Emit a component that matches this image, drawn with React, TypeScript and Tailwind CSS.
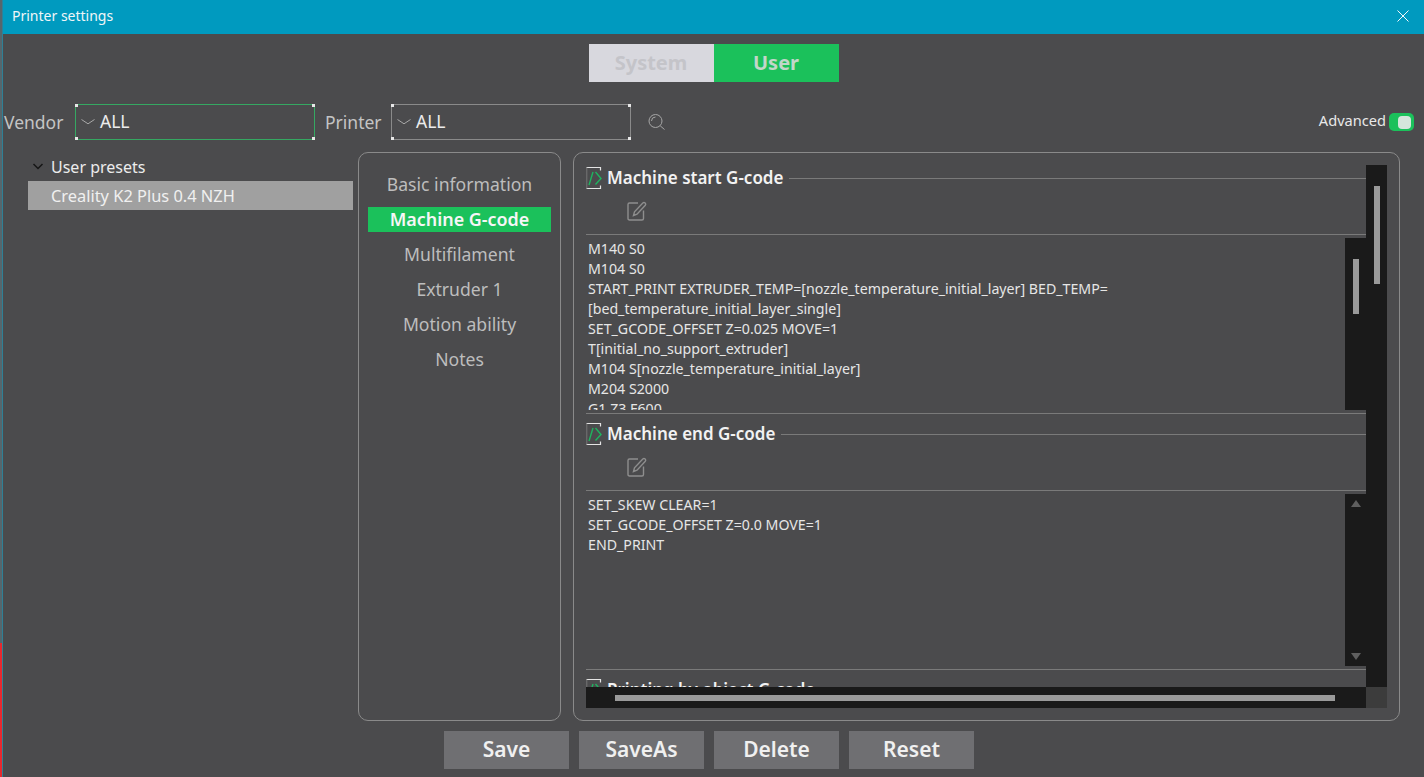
const startGcode = [
  'M140 S0',
  'M104 S0',
  'START_PRINT EXTRUDER_TEMP=[nozzle_temperature_initial_layer] BED_TEMP=',
  '[bed_temperature_initial_layer_single]',
  'SET_GCODE_OFFSET Z=0.025 MOVE=1',
  'T[initial_no_support_extruder]',
  'M104 S[nozzle_temperature_initial_layer]',
  'M204 S2000',
  'G1 Z3 F600',
];
const endGcode = ['SET_SKEW CLEAR=1', 'SET_GCODE_OFFSET Z=0.0 MOVE=1', 'END_PRINT'];
const navItems = ['Basic information', 'Machine G-code', 'Multifilament', 'Extruder 1', 'Motion ability', 'Notes'];

const Corner = ({ className }: { className: string }) => (
  <span className={`absolute w-[3px] h-[3px] bg-[#e8e8e8] ${className}`} />
);

const Combo = ({ active }: { active?: boolean }) => (
  <div className={`relative w-[240px] h-[36px] flex items-center border ${active ? 'border-[#35a862]' : 'border-[#8a8a8a]'}`}>
    <Corner className="-left-px -top-px" />
    <Corner className="-right-px -top-px" />
    <Corner className="-left-px -bottom-px" />
    <Corner className="-right-px -bottom-px" />
    <svg width="14" height="6" viewBox="0 0 14 6" className="ml-[5px]" fill="none" stroke="#a8a8a8" strokeWidth="1">
      <path d="M0.5 0.5 L7 4.8 L13.5 0.5" />
    </svg>
    <span className="ml-[5px] -mt-px text-[17.5px] text-[#ececec]">ALL</span>
  </div>
);

const CodeIcon = () => (
  <svg width="16" height="24" viewBox="0 0 16 24" fill="none" className="shrink-0">
    <path d="M0.5 1.5 H14.5 V4.5 M0.5 22.5 H14.5 V19.5" stroke="#e4e4e4" strokeWidth="1.2" />
    <path d="M0.8 1.5 V22.5" stroke="#7f7f7f" strokeWidth="0.8" />
    <path d="M7 6 L3 19 M9.5 6 L15 12.5 L9.5 18.5" stroke="#1fb35f" strokeWidth="1.4" />
  </svg>
);

const EditIcon = () => (
  <svg width="20" height="20" viewBox="0 0 20 20" fill="none" stroke="#8e8e8e" strokeWidth="1.4">
    <path d="M16.5 9.5 V17.5 Q16.5 19 15 19 H2.5 Q1 19 1 17.5 V3.5 Q1 2 2.5 2 H11" />
    <path d="M6.5 14.5 L7.5 10.8 L15.8 2 Q17 1 18.2 2.1 Q19.2 3.3 18.1 4.5 L10 13.2 Z" />
  </svg>
);

const GcodeSection = ({ title, lines, thumb }: { title: string; lines?: string[]; thumb?: boolean }) => (
  <section className="h-[256px] shrink-0 flex flex-col">
    <div className="h-[26px] flex items-center">
      <CodeIcon />
      <h3 className="ml-[5px] text-[17px] leading-[24px] font-semibold text-[#f2f2f2] whitespace-nowrap">{title}</h3>
      <div className="ml-[6px] flex-1 h-px bg-[#7a7a7a]" />
    </div>
    <div className="h-[43px] pl-[41px] pt-[10px]">
      <EditIcon />
    </div>
    <div className="h-px bg-[#7a7a7a]" />
    {lines && (
      <div className="mt-[3px] h-[172px] flex">
        <div className="flex-1 min-w-0 overflow-hidden pl-[2px] pt-px text-[14.2px] leading-[20px] text-[#e6e6e6]">
          {lines.map((line) => (
            <div key={line} className="whitespace-nowrap">{line}</div>
          ))}
        </div>
        <div className="w-[21px] h-full bg-[#1a1a1a] flex flex-col items-center">
          {thumb ? (
            <div className="mt-[21px] w-[6px] h-[55px] bg-[#9a9a9a]" />
          ) : (
            <div className="h-full flex flex-col justify-between items-center py-[6px]">
              <svg width="10" height="7" viewBox="0 0 10 7"><path d="M5 0 L10 7 H0 Z" fill="#5f5f5f" /></svg>
              <svg width="10" height="7" viewBox="0 0 10 7"><path d="M5 7 L10 0 H0 Z" fill="#5f5f5f" /></svg>
            </div>
          )}
        </div>
      </div>
    )}
    {lines && <div className="mt-[3px] h-px bg-[#7a7a7a]" />}
  </section>
);

export default function App() {
  return (
    <div className="w-[1424px] h-[777px] flex overflow-hidden bg-[#4b4b4d] text-[#e6e6e6] font-['Noto_Sans',sans-serif]">
      {/* desktop peeking out on the left */}
      <div className="w-[2px] flex flex-col shrink-0">
        <div className="h-[643px] bg-[#56666c]" />
        <div className="flex-1 bg-[#e8282e]" />
      </div>

      <div className="flex-1 min-w-0 flex flex-col border-l border-[#2f8096]">
        <header className="h-[34px] shrink-0 bg-[#009abf] flex items-center justify-between pl-[9px] pr-[15px]">
          <span className="-mt-[3px] text-[14px] text-[#f0f6f8]">Printer settings</span>
          <svg width="12" height="12" viewBox="0 0 12 12" stroke="#f4f8fa" strokeWidth="1" fill="none" className="-mt-[3px]">
            <path d="M0.5 0.5 L11.5 11.5 M11.5 0.5 L0.5 11.5" />
          </svg>
        </header>

        <div className="mt-[10px] h-[38px] flex justify-center shrink-0">
          <div className="w-[125px] bg-[#d8d8de] flex items-center justify-center text-[20px] font-bold text-[#c4c4c9]">System</div>
          <div className="w-[125px] bg-[#1bc15b] flex items-center justify-center text-[20px] font-bold text-[#c2d6c9]">User</div>
        </div>

        <div className="mt-[22px] h-[36px] flex items-center shrink-0 pl-[1px] pr-[10px]">
          <span className="w-[71px] text-[17.5px] text-[#c4c4c4]">Vendor</span>
          <Combo active />
          <span className="ml-[10px] w-[66px] text-[17.5px] text-[#c4c4c4]">Printer</span>
          <Combo />
          <svg width="18" height="18" viewBox="0 0 18 18" fill="none" stroke="#a6a6a6" strokeWidth="1" className="ml-[17px]">
            <circle cx="7.5" cy="8" r="6.5" />
            <path d="M3.5 8 A4 4 0 0 1 7.5 4 M12.2 12.8 L16.5 16.5" />
          </svg>
          <span className="ml-auto -mt-[3px] text-[14.6px] text-[#e8e8e8]">Advanced</span>
          <div className="ml-[3px] w-[25px] h-[18px] rounded-[5px] bg-[#1bc15b] flex items-center justify-end pr-[3px]">
            <div className="w-[13px] h-[13px] rounded-[4px] bg-[#d5e6dc]" />
          </div>
        </div>

        <div className="mt-[12px] h-[569px] flex shrink-0">
          <aside className="ml-[25px] w-[325px] shrink-0">
            <div className="h-[29px] flex items-center">
              <svg width="12" height="7" viewBox="0 0 12 7" fill="none" stroke="#161616" strokeWidth="1.5" className="ml-[4px]">
                <path d="M1.5 1 L6 5.5 L10.5 1" />
              </svg>
              <span className="ml-[7px] text-[16px] text-[#ececec]">User presets</span>
            </div>
            <div className="h-[29px] bg-[#a0a0a0] flex items-center pl-[23px] pt-px text-[16.4px] text-[#f0f0f0]">
              Creality K2 Plus 0.4 NZH
            </div>
          </aside>

          <nav className="ml-[5px] w-[203px] shrink-0 rounded-[10px] border border-[#8a8a8a] pt-[19px] pb-[10px] px-[9px] flex flex-col gap-[10px]">
            {navItems.map((item) => (
              <div
                key={item}
                className={`h-[25px] flex items-center justify-center ${
                  item === 'Machine G-code' ? 'bg-[#1bc15b] text-[#f6f6f6] font-semibold text-[17.9px]' : 'text-[#bdbdbd] text-[17.6px]'
                }`}
              >
                {item}
              </div>
            ))}
          </nav>

          <main className="ml-[12px] w-[827px] shrink-0 rounded-[10px] border border-[#8a8a8a] pl-[12px] pr-[12px] pt-[12px] pb-[12px]">
            <div className="h-[543px] grid grid-cols-[780px_21px] grid-rows-[522px_21px]">
              <div className="overflow-hidden flex flex-col">
                <GcodeSection title="Machine start G-code" lines={startGcode} thumb />
                <GcodeSection title="Machine end G-code" lines={endGcode} />
                <GcodeSection title="Printing by object G-code" />
              </div>
              <div className="bg-[#1a1a1a] flex justify-center">
                <div className="mt-[21px] w-[6px] h-[98px] bg-[#9a9a9a]" />
              </div>
              <div className="bg-[#1a1a1a] flex items-center">
                <div className="ml-[29px] w-[720px] h-[6px] bg-[#9a9a9a]" />
              </div>
              <div className="bg-[#3c3c3c]" />
            </div>
          </main>
        </div>

        <footer className="mt-[10px] flex justify-center gap-[10px] pr-[9px]">
          {['Save', 'SaveAs', 'Delete', 'Reset'].map((label) => (
            <button key={label} className="w-[125px] h-[38px] bg-[#6f6f72] text-[21px] font-semibold text-[#f0f0f0]">
              {label}
            </button>
          ))}
        </footer>
      </div>
    </div>
  );
}
